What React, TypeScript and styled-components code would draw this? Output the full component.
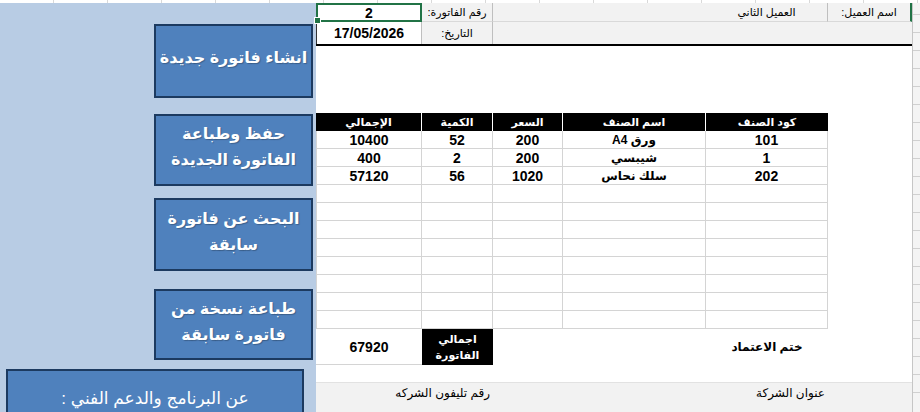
import React from "react";
import styled, { createGlobalStyle } from "styled-components";

const GlobalStyle = createGlobalStyle`
  html, body { margin: 0; padding: 0; background: #fff; overflow: hidden; }
  body { font-family: "Liberation Sans", "DejaVu Sans", sans-serif; color: #000; }
`;

const COLS = "106px 71px 70px 143px 122px 84px";
const GRID = "#d4d4d4";

const Page = styled.div`
  width: 920px; height: 412px; overflow: hidden;
  display: flex; flex-direction: column;
`;

// sliver of the row above the visible area
const TopStrip = styled.div`
  height: 3px; flex: none;
  background: #fff repeating-linear-gradient(90deg, transparent 0 53px, #d9d9d9 53px 54px);
`;

const Body = styled.div`
  flex: 1; display: flex; min-height: 0;
`;

const Panel = styled.div`
  width: 316px; flex: none;
  background: #b8cce4;
  display: flex; flex-direction: column; align-items: flex-end;
  padding: 21px 3px 0 0; box-sizing: border-box;
`;

const ActionButton = styled.div<{ $h: number; $gap: number }>`
  width: 159px; height: ${(p) => p.$h}px; margin-top: ${(p) => p.$gap}px;
  box-sizing: border-box; flex: none;
  background: #4f81bd; border: 2px solid #1c3a60;
  color: #fff; font-weight: bold; font-size: 16px; line-height: 1.6;
  display: flex; align-items: center; justify-content: center;
  text-align: center; direction: rtl; white-space: nowrap;
  padding-bottom: 6px;
  text-shadow: 1px 1px 1px rgba(0, 0, 0, 0.25);
`;

const AboutButton = styled.div`
  align-self: flex-start; margin: 9px 0 0 6px;
  width: 298px; height: 60px; flex: none; box-sizing: border-box;
  background: #4f81bd; border: 2px solid #1c3a60; border-bottom: none;
  color: #fff; font-size: 17px; text-align: center; direction: rtl;
  padding-top: 17px;
`;

const Sheet = styled.div`
  flex: 1; display: flex; background: #fff;
`;

const SheetMain = styled.div`
  width: 596px; flex: none; display: flex; flex-direction: column;
`;

const EdgeStrip = styled.div`
  flex: 1; border-left: 1px solid #c6c6c6;
  background: #f4f4f4 repeating-linear-gradient(180deg, transparent 0 17px, #d0d0d0 17px 18px);
  background-position: 0 -6px;
`;

const Band = styled.div<{ $rows: string; $bg?: string }>`
  display: grid; grid-template-columns: ${COLS};
  grid-template-rows: ${(p) => p.$rows};
  background: ${(p) => p.$bg || "#fff"};
`;

const HeaderBand = styled(Band)`
  border-bottom: 2px solid #000;
`;

const Cell = styled.div<{
  $span?: number;
  $bg?: string;
  $align?: "center" | "right";
  $bold?: boolean;
  $size?: number;
  $right?: string;
  $left?: string;
  $bottom?: string;
  $color?: string;
}>`
  grid-column: span ${(p) => p.$span || 1};
  box-sizing: border-box; min-width: 0;
  background: ${(p) => p.$bg || "transparent"};
  border-right: ${(p) => p.$right || "none"};
  border-left: ${(p) => p.$left || "none"};
  border-bottom: ${(p) => p.$bottom || "none"};
  color: ${(p) => p.$color || "#000"};
  font-size: ${(p) => p.$size || 11}px;
  font-weight: ${(p) => (p.$bold ? "bold" : "normal")};
  display: flex; align-items: center;
  justify-content: ${(p) => (p.$align === "right" ? "flex-start" : "center")};
  direction: rtl; white-space: nowrap;
  padding: 0 3px;
`;

const SelectedCell = styled(Cell)`
  position: relative;
  border: 2px solid #217346;
  &::after {
    content: ""; position: absolute; left: -4px; bottom: -4px;
    width: 5px; height: 5px; background: #217346; border: 1px solid #fff;
  }
`;

const TotalLabel = styled(Cell)`
  background: #000; color: #fff; font-weight: bold;
  flex-direction: column; line-height: 16px;
`;

const Spacer = styled.div<{ $h: number }>`
  height: ${(p) => p.$h}px; flex: none;
`;

const FooterBand = styled(Band)`
  flex: 1; border-top: 1px solid #e2e2e2;
  align-items: start;
`;

const FooterText = styled(Cell)`
  font-size: 12px; padding-top: 3px; align-items: flex-start;
`;

type Item = { code: string; name: string; price: string; qty: string; total: string };

const items: Item[] = [
  { code: "101", name: "ورق A4", price: "200", qty: "52", total: "10400" },
  { code: "1", name: "شيبسي", price: "200", qty: "2", total: "400" },
  { code: "202", name: "سلك نحاس", price: "1020", qty: "56", total: "57120" },
];

const EMPTY_ROWS = 8;
const line = `1px solid ${GRID}`;

function App() {
  const rows: (Item | null)[] = [...items, ...Array(EMPTY_ROWS).fill(null)];
  const grand = items.reduce((s, i) => s + Number(i.total), 0);

  return (
    <Page>
      <GlobalStyle />
      <TopStrip />
      <Body>
        <Panel>
          <ActionButton $h={74} $gap={0}>انشاء فاتورة جديدة</ActionButton>
          <ActionButton $h={72} $gap={16}>
            حفظ وطباعة
            <br />
            الفاتورة الجديدة
          </ActionButton>
          <ActionButton $h={73} $gap={12}>
            البحث عن فاتورة
            <br />
            سابقة
          </ActionButton>
          <ActionButton $h={71} $gap={18}>
            طباعة نسخة من
            <br />
            فاتورة سابقة
          </ActionButton>
          <AboutButton>عن البرنامج والدعم الفني :</AboutButton>
        </Panel>

        <Sheet>
          <SheetMain>
            <HeaderBand $rows="19px 22px" $bg="#f2f2f2">
              <SelectedCell $bg="#fff" $bold $size={14}>2</SelectedCell>
              <Cell $right="1px solid #bfbfbf" $bottom="1px solid #d9d9d9">رقم الفاتورة:</Cell>
              <Cell $span={2} $bottom="1px solid #d9d9d9" />
              <Cell $right="1px solid #bfbfbf" $bottom="1px solid #d9d9d9">العميل الثاني</Cell>
              <Cell $right="2px solid #217346" $bottom="1px solid #d9d9d9">اسم العميل:</Cell>

              <Cell $bg="#fff" $bold $size={14} $left="1px solid #333" $right="1px solid #bfbfbf">
                17/05/2026
              </Cell>
              <Cell $right="1px solid #bfbfbf">التاريخ:</Cell>
              <Cell $span={4} />
            </HeaderBand>

            <Spacer $h={67} />

            <Band $rows="18px">
              <Cell $bg="#000" $color="#fff" $bold $right="1px solid #fff">الإجمالي</Cell>
              <Cell $bg="#000" $color="#fff" $bold $right="1px solid #fff">الكمية</Cell>
              <Cell $bg="#000" $color="#fff" $bold $right="1px solid #fff">السعر</Cell>
              <Cell $bg="#000" $color="#fff" $bold $right="1px solid #fff">اسم الصنف</Cell>
              <Cell $bg="#000" $color="#fff" $bold>كود الصنف</Cell>
              <Cell />
            </Band>

            <Band $rows={`repeat(${rows.length}, 18px)`}>
              {rows.map((r, i) => (
                <React.Fragment key={i}>
                  <Cell $bold $size={14} $left={line} $right={line} $bottom={line}>{r?.total}</Cell>
                  <Cell $bold $size={14} $right={line} $bottom={line}>{r?.qty}</Cell>
                  <Cell $bold $size={14} $right={line} $bottom={line}>{r?.price}</Cell>
                  <Cell $bold $size={12} $right={line} $bottom={line}>{r?.name}</Cell>
                  <Cell $bold $size={14} $right={line} $bottom={line}>{r?.code}</Cell>
                  <Cell />
                </React.Fragment>
              ))}
            </Band>

            <Band $rows="36px">
              <Cell $bold $size={14} $bottom={line}>{grand}</Cell>
              <TotalLabel>
                <span>اجمالي</span>
                <span>الفاتورة</span>
              </TotalLabel>
              <Cell $span={2} />
              <Cell $bold $size={12}>ختم الاعتماد</Cell>
              <Cell />
            </Band>

            <Spacer $h={17} />

            <FooterBand $rows="1fr" $bg="#f2f2f2">
              <FooterText $span={2} $align="right">رقم تليفون الشركه</FooterText>
              <Cell $span={2} />
              <FooterText $align="right">عنوان الشركة</FooterText>
              <Cell />
            </FooterBand>
          </SheetMain>
          <EdgeStrip />
        </Sheet>
      </Body>
    </Page>
  );
}

export default App;
